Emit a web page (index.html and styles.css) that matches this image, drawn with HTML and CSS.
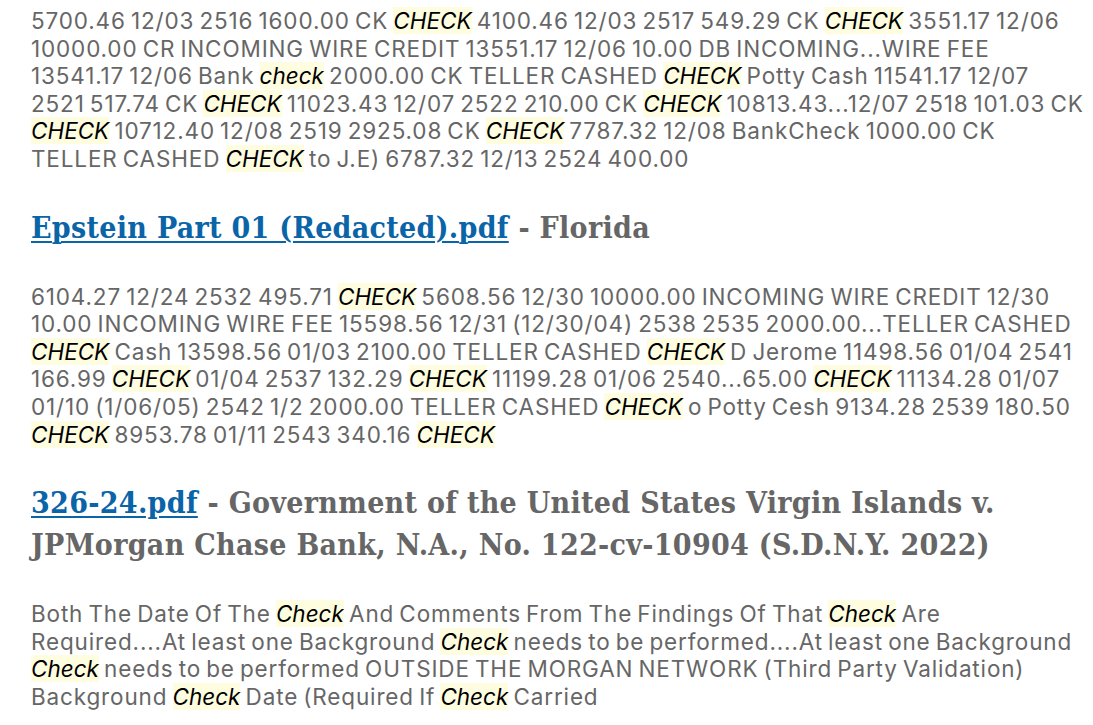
FILE: index.html
```html
<!DOCTYPE html>
<html lang="en">
<head>
<meta charset="utf-8">
<title>Search results</title>
<link rel="stylesheet" href="styles.css">
</head>
<body>
<main class="results">
  <p class="snippet">5700.46 12/03 2516 1600.00 CK <mark>CHECK</mark> 4100.46 12/03 2517 549.29 CK <mark>CHECK</mark> 3551.17 12/06 10000.00 CR INCOMING WIRE CREDIT 13551.17 12/06 10.00 DB INCOMING...WIRE FEE 13541.17 12/06 Bank <mark>check</mark> 2000.00 CK TELLER CASHED <mark>CHECK</mark> Potty Cash 11541.17 12/07 2521 517.74 CK <mark>CHECK</mark> 11023.43 12/07 2522 210.00 CK <mark>CHECK</mark> 10813.43...12/07 2518 101.03 CK <mark>CHECK</mark> 10712.40 12/08 2519 2925.08 CK <mark>CHECK</mark> 7787.32 12/08 BankCheck 1000.00 CK TELLER CASHED <mark>CHECK</mark> to J.E) 6787.32 12/13 2524 400.00</p>

  <h3 class="result-title"><a href="#">Epstein Part 01 (Redacted).pdf</a> - Florida</h3>
  <p class="snippet">6104.27 12/24 2532 495.71 <mark>CHECK</mark> 5608.56 12/30 10000.00 INCOMING WIRE CREDIT 12/30 10.00 INCOMING WIRE FEE 15598.56 12/31 (12/30/04) 2538 2535 2000.00...TELLER CASHED <mark>CHECK</mark> Cash 13598.56 01/03 2100.00 TELLER CASHED <mark>CHECK</mark> D Jerome 11498.56 01/04 2541 166.99 <mark>CHECK</mark> 01/04 2537 132.29 <mark>CHECK</mark> 11199.28 01/06 2540...65.00 <mark>CHECK</mark> 11134.28 01/07 01/10 (1/06/05) 2542 1/2 2000.00 TELLER CASHED <mark>CHECK</mark> o Potty Cesh 9134.28 2539 180.50 <mark>CHECK</mark> 8953.78 01/11 2543 340.16 <mark>CHECK</mark></p>

  <h3 class="result-title"><a href="#">326-24.pdf</a> - Government of the United States Virgin Islands v. JPMorgan Chase Bank, N.A., No. 122-cv-10904 (S.D.N.Y. 2022)</h3>
  <p class="snippet">Both The Date Of The <mark>Check</mark> And Comments From The Findings Of That <mark>Check</mark> Are Required....At least one Background <mark>Check</mark> needs to be performed....At least one Background <mark>Check</mark> needs to be performed OUTSIDE THE MORGAN NETWORK (Third Party Validation) Background <mark>Check</mark> Date (Required If <mark>Check</mark> Carried</p>
</main>
</body>
</html>
```

FILE: styles.css
```css
html, body {
  margin: 0;
  padding: 0;
  background: #ffffff;
}

.results {
  display: flex;
  flex-direction: column;
  gap: 34px;
  padding: 7px 7.5px 0 31px;
}

.snippet {
  margin: 0;
  font-family: "Inter", "Liberation Sans", sans-serif;
  font-size: 22.5px;
  letter-spacing: 0.85px;
  word-spacing: -2px;
  line-height: 27.6px;
  color: #666666;
}

.snippet mark {
  background: #fffde0;
  color: #000000;
  font-style: italic;
  letter-spacing: 0;
}

.result-title {
  margin: 0;
  font-family: "DejaVu Serif Condensed", "DejaVu Serif", serif;
  font-stretch: condensed;
  font-weight: 700;
  font-size: 30px;
  letter-spacing: 0.3px;
  line-height: 42px;
  color: #666666;
}

.result-title a {
  color: #0a64a8;
  text-decoration: underline;
  text-decoration-thickness: 2px;
  text-underline-offset: 3px;
}
```
